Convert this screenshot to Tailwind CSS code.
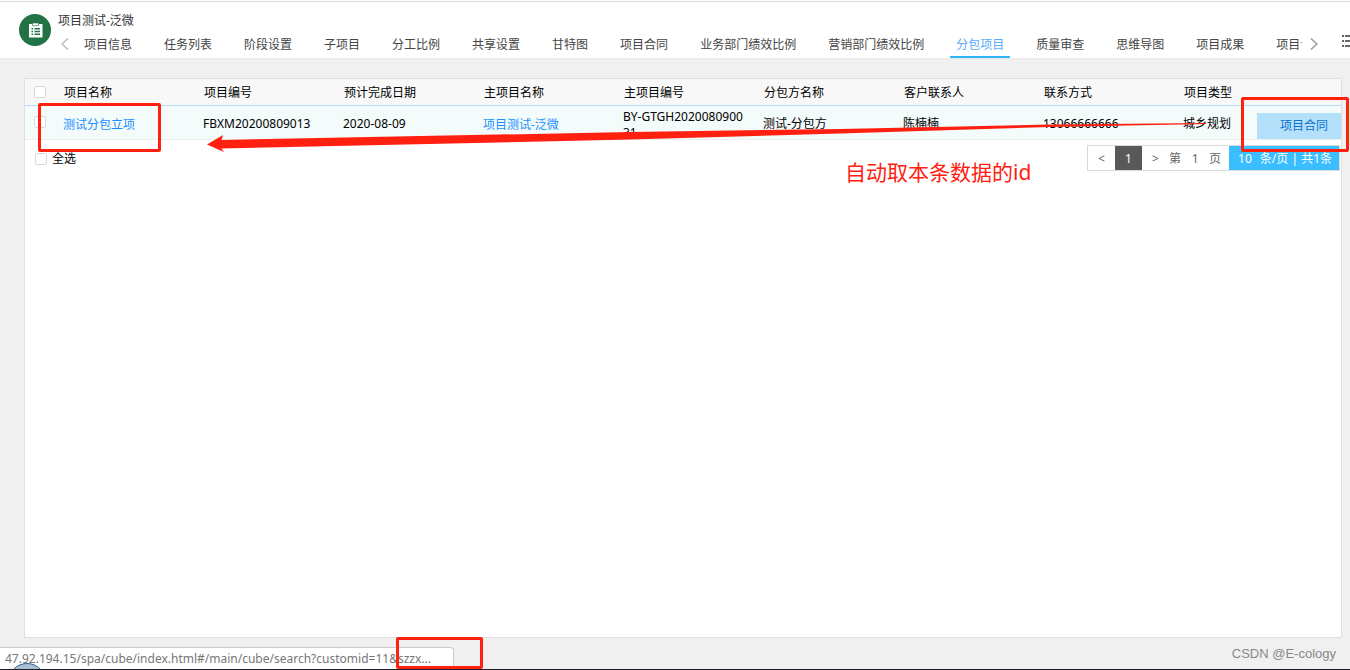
<!DOCTYPE html>
<html lang="zh-CN">
<head>
<meta charset="utf-8">
<title>项目测试-泛微</title>
<script src="https://cdn.jsdelivr.net/npm/@tailwindcss/browser@4"></script>
</head>
<body class="relative flex min-h-screen flex-col overflow-hidden border-b border-[#1e1e2a] bg-[#f0f0f0] font-['Noto_Sans','Noto_Sans_CJK_SC',sans-serif] text-[12px] leading-4 text-black">

<header class="flex h-[59px] border-b border-[#e8e8e8] bg-white pl-[19px] shadow-[inset_0_2px_0_-1px_#fff,inset_0_2px_0_0_#dadada]">
  <svg class="mt-[14px] h-8 w-8 shrink-0" viewBox="0 0 32 32" aria-hidden="true">
    <circle cx="16" cy="16" r="16" fill="#217346"/>
    <path fill="#fff" d="M10 10h13.500v13.500H10z"/>
    <path fill="#fff" stroke="#217346" stroke-width=".6" d="M13.500 9h6v2.600h-6z"/>
    <path fill="#217346" d="M12.500 14h1.500v1.400h-1.500zM15.500 14h5.500v1.400h-5.500zM12.500 16.800h1.500v1.400h-1.500zM15.500 16.800h5.500v1.400h-5.500zM12.500 19.600h1.500v1.400h-1.500zM15.500 19.600h5.500v1.400h-5.500z"/>
  </svg>
  <div class="ml-[7px] flex min-w-0 flex-1 flex-col">
    <h1 class="mt-[13px] h-4 text-[#333]">项目测试-泛微</h1>
    <div class="flex h-[29px] items-stretch">
      <button class="flex w-5 shrink-0 items-center pl-[3px]" aria-label="向左"><svg class="h-3 w-2" viewBox="0 0 8 12" fill="none" stroke="#bbb" stroke-width="1.500"><path d="M7 .5 1 6l6 5.500"/></svg></button>
      <nav class="flex min-w-0 flex-1 gap-5 overflow-hidden whitespace-nowrap text-[#444]">
        <a href="#" class="px-1.5 pt-2">项目信息</a>
        <a href="#" class="px-1.5 pt-2">任务列表</a>
        <a href="#" class="px-1.5 pt-2">阶段设置</a>
        <a href="#" class="px-1.5 pt-2">子项目</a>
        <a href="#" class="px-1.5 pt-2">分工比例</a>
        <a href="#" class="px-1.5 pt-2">共享设置</a>
        <a href="#" class="px-1.5 pt-2">甘特图</a>
        <a href="#" class="px-1.5 pt-2">项目合同</a>
        <a href="#" class="px-1.5 pt-2">业务部门绩效比例</a>
        <a href="#" class="px-1.5 pt-2">营销部门绩效比例</a>
        <a href="#" aria-current="page" class="border-b-2 border-[#2db7f5] px-1.5 pt-2 text-[#5aaafa]">分包项目</a>
        <a href="#" class="px-1.5 pt-2">质量审查</a>
        <a href="#" class="px-1.5 pt-2">思维导图</a>
        <a href="#" class="px-1.5 pt-2">项目成果</a>
        <a href="#" class="px-1.5 pt-2">项目计划</a>
      </nav>
      <button class="flex w-10 shrink-0 items-center pl-2" aria-label="向右"><svg class="h-3 w-2" viewBox="0 0 8 12" fill="none" stroke="#999" stroke-width="1.500"><path d="M1 .5 7 6l-6 5.500"/></svg></button>
      <button class="flex w-2 shrink-0 items-center overflow-hidden pb-1.5" aria-label="更多"><svg class="h-3 w-3 shrink-0" viewBox="0 0 12 12" fill="#666"><path d="M0 0h2v2H0zM0 5h2v2H0zM0 10h2v2H0zM3 0h9v2H3zM3 5h9v2H3zM3 10h9v2H3z"/></svg></button>
    </div>
  </div>
</header>

<main class="relative mx-6 mt-[19px] mb-[31px] mr-2 flex-1 border border-[#e0e0e0] bg-white">
  <table class="w-full table-fixed border-collapse text-left">
    <colgroup><col class="w-[30px]"><col class="w-[140px]"><col class="w-[140px]"><col class="w-[140px]"><col class="w-[140px]"><col class="w-[140px]"><col class="w-[140px]"><col class="w-[140px]"><col class="w-[140px]"><col></colgroup>
    <thead>
      <tr class="h-[26px] border-b border-[#b3dcfa] bg-[#f8f8f8]">
        <th class="pl-[9px] align-middle"><input type="checkbox" aria-label="选择全部行" class="block h-3 w-3 appearance-none rounded-xs border border-[#d9d9d9] bg-white"></th>
        <th class="px-[9px] pt-[3px] font-normal">项目名称</th>
        <th class="px-[9px] pt-[3px] font-normal">项目编号</th>
        <th class="px-[9px] pt-[3px] font-normal">预计完成日期</th>
        <th class="px-[9px] pt-[3px] font-normal">主项目名称</th>
        <th class="px-[9px] pt-[3px] font-normal">主项目编号</th>
        <th class="px-[9px] pt-[3px] font-normal">分包方名称</th>
        <th class="px-[9px] pt-[3px] font-normal">客户联系人</th>
        <th class="px-[9px] pt-[3px] font-normal">联系方式</th>
        <th class="px-[9px] pt-[3px] font-normal">项目类型</th>
      </tr>
    </thead>
    <tbody>
      <tr class="h-[34px] border-b border-[#eee] bg-[#f4fbfb]">
        <td class="pl-[9px]"><input type="checkbox" aria-label="选择测试分包立项" class="block h-3 w-3 appearance-none rounded-xs border border-[#d9d9d9] bg-white"></td>
        <td class="px-2 pt-[5px]"><a href="#" class="text-[#1890ff]">测试分包立项</a></td>
        <td class="px-2 pt-1">FBXM20200809013</td>
        <td class="px-2 pt-1">2020-08-09</td>
        <td class="px-2 pt-[5px]"><a href="#" class="text-[#1890ff]">项目测试-泛微</a></td>
        <td class="px-2 pt-[3px]"><div class="h-[30px] overflow-hidden break-all">BY-GTGH202008090031</div></td>
        <td class="px-2 pt-1">测试-分包方</td>
        <td class="px-2 pt-1">陈楠楠</td>
        <td class="px-2 pt-1">13066666666</td>
        <td class="px-2 pt-1">城乡规划</td>
      </tr>
    </tbody>
  </table>
  <button class="absolute top-[34px] right-0 h-[26px] w-[84px] bg-[#b5e0fc] pl-[10px] text-[#0b72c8]">项目合同</button>

  <div class="flex items-start justify-between pl-[10px] pr-px pt-[5px]">
    <label class="flex items-center gap-[5px] pt-[6px]"><input type="checkbox" class="h-3 w-3 appearance-none rounded-xs border border-[#d9d9d9] bg-white">全选</label>
    <div class="flex h-[26px] items-stretch border border-[#d9d9d9] text-[#666]">
      <button class="w-[27px] pt-0.5">&lt;</button>
      <button class="w-[27px] bg-[#595959] pt-0.5 text-white">1</button>
      <button class="w-[27px] pt-0.5">&gt;</button>
      <label class="flex items-center pt-0.5">第<input type="text" value="1" class="w-7 text-center outline-none" aria-label="页码">页</label>
      <div class="ml-2 flex items-center gap-2 bg-[#3abeff] pt-0.5 pl-[9px] pr-[7px] text-white"><span>10</span><span>条/页 | 共1条</span></div>
    </div>
  </div>
</main>

<div class="absolute bottom-0 left-0 h-[22px] w-[454px] rounded-tr-sm border-t border-r border-[#ccc] bg-white pt-[3px] pl-[5px] text-[#777]">47.92.194.15/spa/cube/index.html#/main/cube/search?customid=11&amp;szzx...</div>
<svg class="absolute bottom-0 left-3 h-[6px] w-[30px]" viewBox="0 0 30 6" aria-hidden="true"><circle cx="15" cy="19" r="18.500" fill="#a9c0d4" stroke="#2e5f8a"/></svg>
<div class="absolute right-[14px] bottom-[7px] font-['Liberation_Sans',sans-serif] text-[13px] text-[#888]">CSDN @E-cology</div>

<!-- Annotations over the page -->
<div class="absolute top-[103px] left-[38px] h-[49px] w-[123px] rounded-xs border-3 border-[#ff2010]"></div>
<div class="absolute top-[97px] right-[1px] h-[55px] w-[108px] rounded-xs border-3 border-[#ff2010]"></div>
<div class="absolute bottom-0 left-[396px] h-[32px] w-[87px] rounded-xs border-3 border-[#ff2010]"></div>
<svg class="absolute top-[120px] left-[200px] h-[40px] w-[1010px]" viewBox="0 0 1010 40" fill="#ff2010" aria-hidden="true"><path d="M7 24.500 23 15l-1.500 5L430 12 640 9 850 4.500 1006 3v1L850 7 640 13.500 430 19.500 21.500 28.500 24 32z"/></svg>
<p class="absolute top-[160px] left-[845px] text-[21px] leading-6 text-[#ff2010]">自动取本条数据的id</p>
</body>
</html>
